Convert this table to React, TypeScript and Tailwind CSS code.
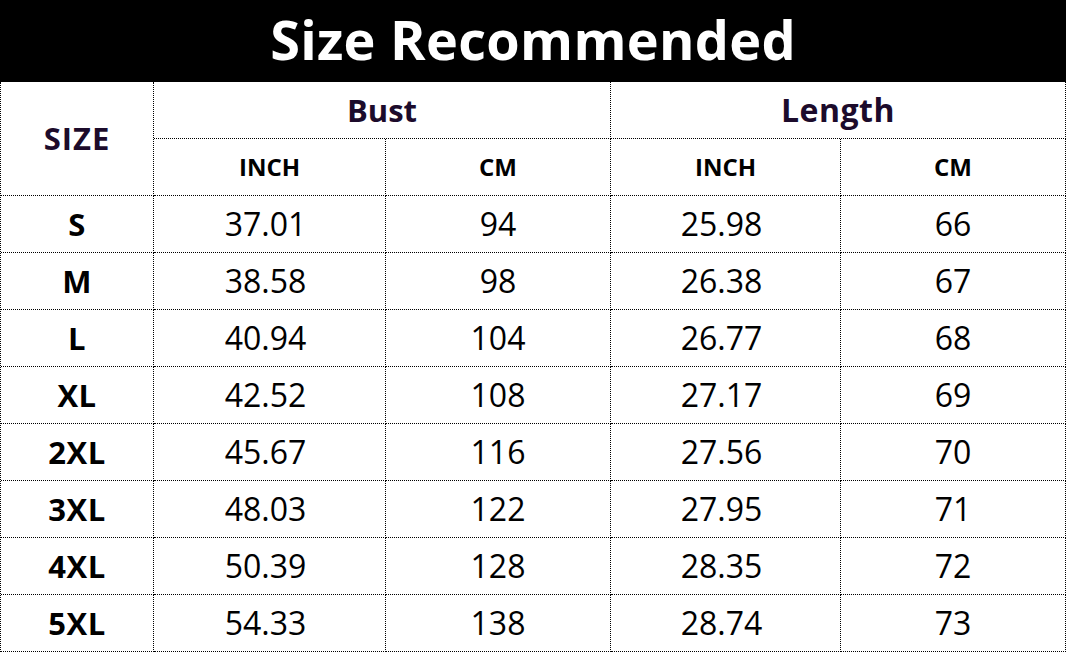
import React from "react";

interface SizeRow {
  size: string;
  bustInch: string;
  bustCm: string;
  lengthInch: string;
  lengthCm: string;
}

const rows: SizeRow[] = [
  { size: "S", bustInch: "37.01", bustCm: "94", lengthInch: "25.98", lengthCm: "66" },
  { size: "M", bustInch: "38.58", bustCm: "98", lengthInch: "26.38", lengthCm: "67" },
  { size: "L", bustInch: "40.94", bustCm: "104", lengthInch: "26.77", lengthCm: "68" },
  { size: "XL", bustInch: "42.52", bustCm: "108", lengthInch: "27.17", lengthCm: "69" },
  { size: "2XL", bustInch: "45.67", bustCm: "116", lengthInch: "27.56", lengthCm: "70" },
  { size: "3XL", bustInch: "48.03", bustCm: "122", lengthInch: "27.95", lengthCm: "71" },
  { size: "4XL", bustInch: "50.39", bustCm: "128", lengthInch: "28.35", lengthCm: "72" },
  { size: "5XL", bustInch: "54.33", bustCm: "138", lengthInch: "28.74", lengthCm: "73" },
];

const cell =
  "flex items-center justify-center h-[57px] border-r border-b border-dotted border-black";

const App = () => {
  return (
    <div
      className="w-[1066px] h-[652px] bg-white overflow-hidden"
      style={{ fontFamily: '"Open Sans", "Noto Sans", sans-serif' }}
    >
      {/* title bar */}
      <div className="h-[82px] border border-dotted border-black bg-black flex items-center justify-center">
        <h1 className="text-white text-[54px] font-bold leading-none tracking-[0.3px] -mt-1">
          Size Recommended
        </h1>
      </div>

      <div className="grid grid-cols-[153px_232px_225px_230px_225px] border-l border-dotted border-black">
        <div className="row-span-2 flex items-center justify-center border-r border-b border-dotted border-black text-[31px] font-bold text-[#1c0b2b] tracking-[1px]">
          SIZE
        </div>
        <div className={`${cell} col-span-2 text-[31px] font-bold text-[#1c0b2b]`}>
          Bust
        </div>
        <div className={`${cell} col-span-2 text-[32px] font-bold text-[#1c0b2b] tracking-[0.5px]`}>
          Length
        </div>
        <div className={`${cell} text-[24px] font-bold text-black`}>INCH</div>
        <div className={`${cell} text-[24px] font-bold text-black`}>CM</div>
        <div className={`${cell} text-[24px] font-bold text-black`}>INCH</div>
        <div className={`${cell} text-[24px] font-bold text-black`}>CM</div>

        {rows.map((r) => (
          <React.Fragment key={r.size}>
            <div className={`${cell} text-[31px] font-bold text-black tracking-[0.5px]`}>{r.size}</div>
            <div className={`${cell} text-[32px] text-black pr-2`}>{r.bustInch}</div>
            <div className={`${cell} text-[32px] text-black`}>{r.bustCm}</div>
            <div className={`${cell} text-[32px] text-black pr-2`}>{r.lengthInch}</div>
            <div className={`${cell} text-[32px] text-black`}>{r.lengthCm}</div>
          </React.Fragment>
        ))}
      </div>
    </div>
  );
};

export default App;
